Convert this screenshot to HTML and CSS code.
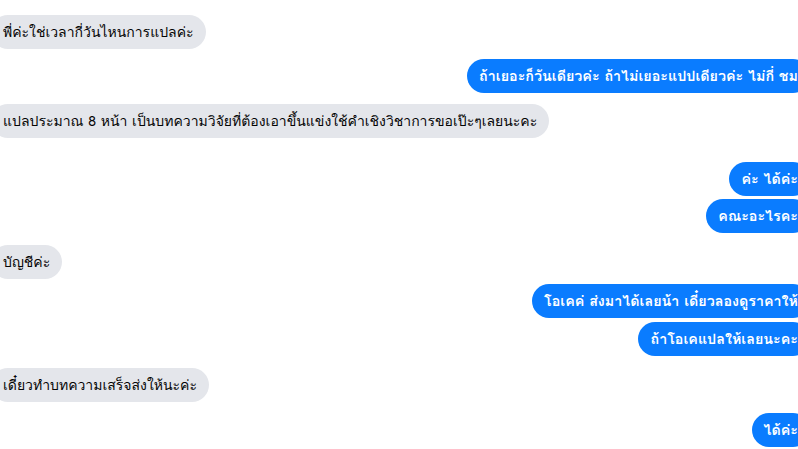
FILE: index.html
```html
<!DOCTYPE html>
<html lang="th">
<head>
<meta charset="utf-8">
<link rel="stylesheet" href="styles.css">
</head>
<body>
<div class="chat">
  <div class="msg in m-first">พี่ค่ะใช่เวลากี่วันไหนการแปลค่ะ</div>
  <div class="msg out m-10">ถ้าเยอะก็วันเดียวค่ะ ถ้าไม่เยอะแปปเดียวค่ะ ไม่กี่ ชม</div>
  <div class="msg in m-11">แปลประมาณ 8 หน้า เป็นบทความวิจัยที่ต้องเอาขึ้นแข่งใช้คำเชิงวิชาการขอเป๊ะๆเลยนะคะ</div>
  <div class="msg out m-24">ค่ะ ได้ค่ะ</div>
  <div class="msg out m-3">คณะอะไรคะ</div>
  <div class="msg in m-12">บัญชีค่ะ</div>
  <div class="msg out m-5">โอเคค่ ส่งมาได้เลยน้า เดี๋ยวลองดูราคาให้</div>
  <div class="msg out m-4">ถ้าโอเคแปลให้เลยนะคะ</div>
  <div class="msg in m-12">เดี๋ยวทำบทความเสร็จส่งให้นะค่ะ</div>
  <div class="msg out m-11">ได้ค่ะ</div>
</div>
</body>
</html>
```

FILE: styles.css
```css
html, body {
  margin: 0;
  padding: 0;
  background: #ffffff;
  overflow: hidden;
  width: 798px;
  height: 449px;
}

.chat {
  display: flex;
  flex-direction: column;
  font-family: "Loma", "Garuda", "Noto Sans Thai Looped", "Noto Sans Thai", "Tahoma", "Noto Sans", sans-serif;
  font-size: 14px;
}

.msg {
  box-sizing: border-box;
  height: 34px;
  line-height: 34px;
  padding: 0 12px;
  border-radius: 17px;
  white-space: nowrap;
}

.in {
  align-self: flex-start;
  margin-left: -9px;
  background: #e4e6eb;
  color: #050505;
}

.out {
  align-self: flex-end;
  margin-right: -12px;
  background: #0a7cff;
  color: #ffffff;
  font-size: 14.3px;
  font-weight: 600;
}

.m-first { margin-top: 15px; }
.m-3 { margin-top: 3px; }
.m-4 { margin-top: 4px; }
.m-5 { margin-top: 5px; }
.m-10 { margin-top: 10px; }
.m-11 { margin-top: 11px; }
.m-12 { margin-top: 12px; }
.m-24 { margin-top: 24px; }
```
